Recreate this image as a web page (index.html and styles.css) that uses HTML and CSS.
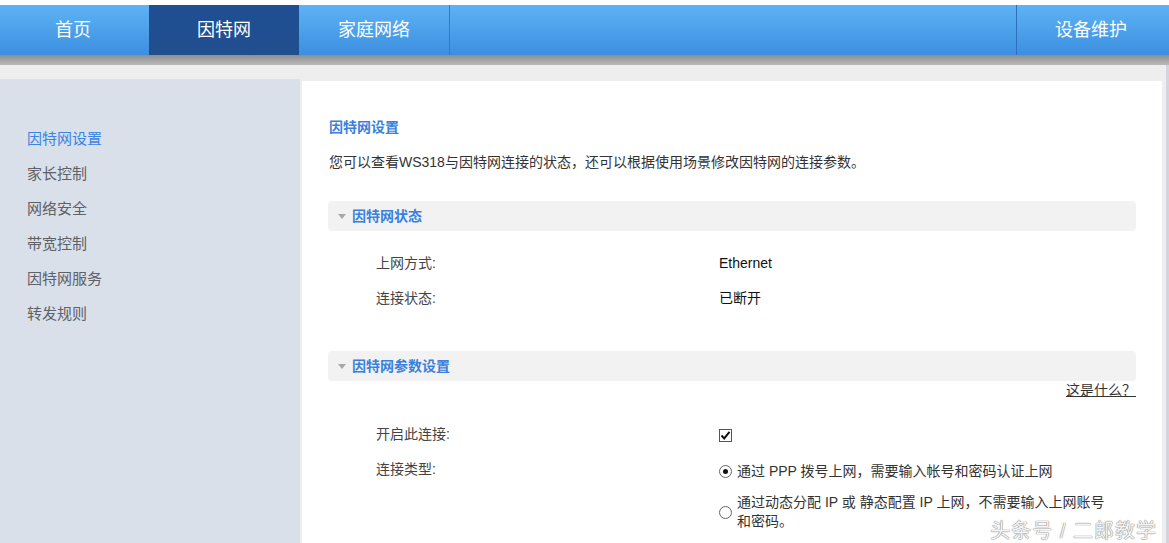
FILE: index.html
```html
<!DOCTYPE html>
<html lang="zh-CN">
<head>
    <meta charset="UTF-8">
    <meta name="viewport" content="width=device-width, initial-scale=1.0">
    <title>因特网设置</title>
    <link rel="stylesheet" href="styles.css">
</head>
<body>
    <div class="top-nav">
        <a class="nav-item">首页</a>
        <a class="nav-item active">因特网</a>
        <a class="nav-item">家庭网络</a>
        <span class="nav-fill"></span>
        <a class="nav-item nav-right">设备维护</a>
    </div>
    <div class="nav-shadow"></div>

    <div class="main">
        <div class="sidebar">
            <a class="side-item current">因特网设置</a>
            <a class="side-item">家长控制</a>
            <a class="side-item">网络安全</a>
            <a class="side-item">带宽控制</a>
            <a class="side-item">因特网服务</a>
            <a class="side-item">转发规则</a>
        </div>

        <div class="panel">
            <h3 class="page-title">因特网设置</h3>
            <p class="page-desc">您可以查看WS318与因特网连接的状态，还可以根据使用场景修改因特网的连接参数。</p>

            <div class="section-head"><span class="arrow"></span>因特网状态</div>
            <div class="rows first">
                <div class="row">
                    <span class="label">上网方式:</span>
                    <span class="value">Ethernet</span>
                </div>
                <div class="row">
                    <span class="label">连接状态:</span>
                    <span class="value">已断开</span>
                </div>
            </div>

            <div class="section-head second"><span class="arrow"></span>因特网参数设置</div>
            <div class="help"><a class="help-link">这是什么？</a></div>
            <div class="rows">
                <div class="row">
                    <span class="label">开启此连接:</span>
                    <span class="value">
                        <svg class="check" width="13" height="13" viewBox="0 0 13 13">
                            <rect x="0.5" y="0.5" width="12" height="12" fill="#fff" stroke="#555"/>
                            <path d="M2.5 6.5 L5.2 9.4 L10.5 2.8" fill="none" stroke="#111" stroke-width="2"/>
                        </svg>
                    </span>
                </div>
                <div class="row row-type">
                    <span class="label">连接类型:</span>
                    <div class="options">
                        <div class="option">
                            <span class="radio checked"></span>
                            <span class="option-text">通过 PPP 拨号上网，需要输入帐号和密码认证上网</span>
                        </div>
                        <div class="option">
                            <span class="radio"></span>
                            <span class="option-text">
                                <span class="line">通过动态分配 IP 或 静态配置 IP 上网，不需要输入上网账号</span>
                                <span class="line">和密码。</span>
                            </span>
                        </div>
                    </div>
                </div>
            </div>
        </div>
    </div>

    <div class="watermark">头条号 / 二郎教学</div>
</body>
</html>
```

FILE: styles.css
```css
body {
    margin: 0;
    font-family: "Liberation Sans", "Noto Sans CJK SC", sans-serif;
    background-color: #fff;
    color: #333;
    overflow: hidden;
}
a {
    text-decoration: none;
}
.top-nav {
    display: flex;
    height: 50px;
    margin-top: 5px;
    background: linear-gradient(#5db3f4, #3c8fe0);
}
.nav-item {
    width: 146px;
    line-height: 50px;
    text-align: center;
    color: #fff;
    font-size: 18px;
}
.nav-item.active {
    background: linear-gradient(#1f4e93, #214f8e);
    width: 150px;
    margin-left: 3px;
}
.nav-item:nth-child(3) {
    width: 150px;
    border-right: 1px solid #3478c8;
}
.nav-fill {
    flex: 1;
}
.nav-right {
    width: 148px;
    padding-right: 4px;
    border-left: 1px solid #2e6fbd;
}
.nav-shadow {
    height: 10px;
    background: linear-gradient(#8e8e8e, #b9b9b9);
}
.main {
    display: flex;
    background-color: #eeeeee;
    padding-top: 14px;
    padding-right: 4px;
    min-height: 480px;
    border-right: 3px solid #d2d6dc;
}
.sidebar {
    width: 300px;
    flex-shrink: 0;
    background-color: #d9e0ea;
    padding-top: 42px;
    margin-right: 2px;
}
.side-item {
    display: block;
    padding-left: 27px;
    font-size: 15px;
    line-height: 35px;
    color: #5e6166;
}
.side-item.current {
    color: #3a84e2;
}
.panel {
    flex: 1;
    background-color: #fff;
    margin-top: 2px;
    padding: 36px 26px 0 26px;
}
.page-title {
    margin: 0 0 15px 1px;
    font-size: 14px;
    line-height: 20px;
    color: #3a7fdb;
}
.page-desc {
    margin: 0 0 29px 1px;
    font-size: 14px;
    line-height: 20px;
    color: #333;
}
.section-head {
    height: 30px;
    line-height: 30px;
    background-color: #f2f2f2;
    border-radius: 4px;
    font-size: 14px;
    font-weight: bold;
    color: #3a7fdb;
    padding-left: 10px;
}
.section-head.second {
    margin-top: 35px;
}
.arrow {
    display: inline-block;
    width: 0;
    height: 0;
    border-left: 4px solid transparent;
    border-right: 4px solid transparent;
    border-top: 5px solid #a8a8a8;
    margin-right: 6px;
    vertical-align: 2px;
}
.rows.first {
    padding: 15px 0 0;
}
.row {
    display: flex;
    padding-left: 48px;
    font-size: 14px;
    line-height: 35px;
}
.label {
    width: 343px;
    flex-shrink: 0;
    color: #444;
}
.value {
    color: #111;
}
.check {
    vertical-align: -3px;
}
.help {
    text-align: right;
    font-size: 14px;
    line-height: 18px;
    margin-bottom: 18px;
}
.help-link {
    color: #333;
    text-decoration: underline;
}
.options {
    padding-top: 10px;
    line-height: 19px;
}
.option {
    display: flex;
    align-items: center;
    color: #333;
}
.option + .option {
    margin-top: 12px;
}
.option-text .line {
    display: block;
}
.radio {
    width: 11px;
    height: 11px;
    border: 1px solid #666;
    border-radius: 50%;
    margin-right: 5px;
    flex-shrink: 0;
    position: relative;
    background: #fff;
}
.radio.checked::after {
    content: "";
    position: absolute;
    left: 3px;
    top: 3px;
    width: 5px;
    height: 5px;
    border-radius: 50%;
    background: #111;
}
.watermark {
    position: absolute;
    right: 12px;
    bottom: 1px;
    font-size: 20px;
    line-height: 22px;
    letter-spacing: 1px;
    color: #f4f4f4;
    text-shadow: 0 0 1px #777, 0 0 1px #777;
}
```
